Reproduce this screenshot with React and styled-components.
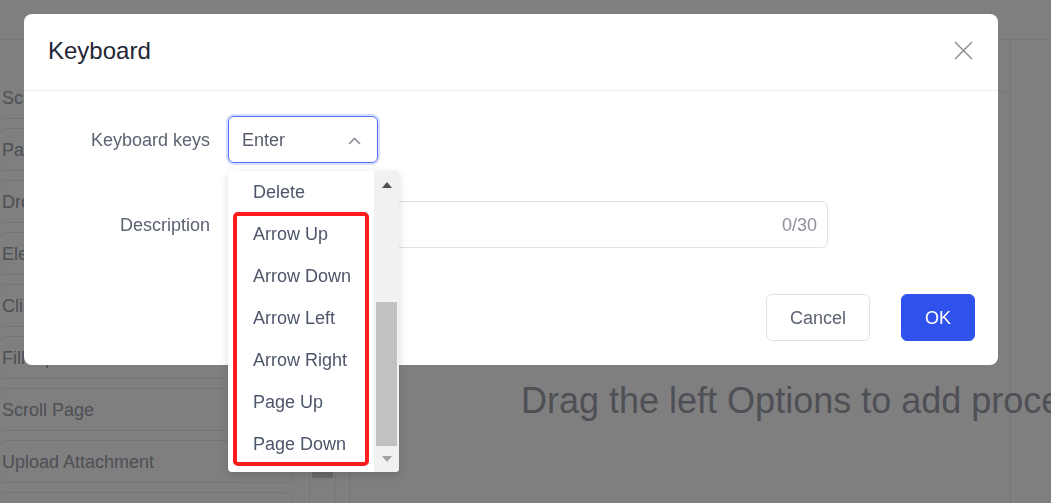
import React, { useLayoutEffect, useRef } from 'react';
import styled, { createGlobalStyle } from 'styled-components';

const GlobalStyle = createGlobalStyle`
  html, body {
    margin: 0;
    padding: 0;
    overflow: hidden;
  }
  body {
    font-family: "Liberation Sans", Arial, sans-serif;
    background: #fff;
  }
  * {
    box-sizing: border-box;
  }
`;

const ITEM_HEIGHT = 42;

const keyOptions = [
  'Enter',
  'Tab',
  'Space',
  'Backspace',
  'Delete',
  'Arrow Up',
  'Arrow Down',
  'Arrow Left',
  'Arrow Right',
  'Page Up',
  'Page Down',
  'Home',
  'End'
];

const sideItems = [
  'Scroll Into View',
  'Paste Text',
  'Drop Down',
  'Element Click',
  'Click Element',
  'Fill Input',
  'Scroll Page',
  'Upload Attachment',
  'Keyboard'
];

const Page = styled.div`
  width: 1051px;
  height: 503px;
  display: flex;
  flex-direction: column;
  background: #fff;
`;

const TopBar = styled.div`
  height: 40px;
  flex-shrink: 0;
  border-bottom: 1px solid #ececec;
`;

const Main = styled.div`
  flex: 1;
  display: flex;
  min-height: 0;
`;

const Sidebar = styled.div`
  width: 350px;
  flex-shrink: 0;
  display: flex;
  border-right: 1px solid #ececec;
`;

const SideColumn = styled.div`
  width: 309px;
  display: flex;
  flex-direction: column;
`;

const SideHeader = styled.div`
  height: 47px;
  flex-shrink: 0;
`;

const CardList = styled.div`
  flex: 1;
  overflow: hidden;
`;

const Card = styled.div`
  width: 293px;
  height: 43px;
  margin-bottom: 9px;
  margin-left: -1px;
  padding: 2px 0 0 2px;
  display: flex;
  align-items: center;
  border: 1px solid #ebebeb;
  border-radius: 6px;
  font-size: 18px;
  color: #9aa0ab;
`;

const SideScroll = styled.div`
  width: 27px;
  display: flex;
  flex-direction: column;
  justify-content: flex-end;
  align-items: center;
  padding-bottom: 25px;
  border-left: 1px solid #f0f0f0;
  border-right: 1px solid #f0f0f0;
`;

const SideThumb = styled.div`
  width: 21px;
  height: 7px;
  background: #d4d4d4;
`;

const RightPanel = styled.div`
  width: 661px;
  flex-shrink: 0;
  display: flex;
  flex-direction: column;
  border-right: 1px solid #ececec;
`;

const PanelHeader = styled.div`
  height: 52px;
  flex-shrink: 0;
  border-bottom: 1px solid #ececec;
`;

const EmptyHint = styled.div`
  padding: 289px 0 0 171px;
  font-size: 36px;
  line-height: 40px;
  color: #9ca1ab;
  white-space: nowrap;
`;

const Mask = styled.div`
  position: fixed;
  inset: 0;
  background: rgba(0, 0, 0, 0.5);
`;

const Dialog = styled.div`
  position: fixed;
  top: 14px;
  left: 24px;
  width: 974px;
  height: 351px;
  background: #fff;
  border-radius: 8px;
  display: flex;
  flex-direction: column;
`;

const DialogHeader = styled.div`
  height: 77px;
  flex-shrink: 0;
  padding: 0 24px;
  display: flex;
  align-items: center;
  justify-content: space-between;
  border-bottom: 1px solid #ececec;
`;

const DialogTitle = styled.div`
  font-size: 24px;
  color: #1f2636;
  margin-top: -2px;
`;

const CloseButton = styled.button`
  width: 20px;
  height: 20px;
  padding: 0;
  margin-right: 1px;
  margin-top: -4px;
  border: none;
  background: none;
  display: flex;
  align-items: center;
  justify-content: center;
  cursor: pointer;
`;

const DialogBody = styled.div`
  flex: 1;
  padding: 25px 23px 24px 24px;
  display: flex;
  flex-direction: column;
`;

const FormRow = styled.div`
  display: flex;
  align-items: center;
  gap: 18px;
  margin-bottom: ${p => p.$gap}px;
`;

const Label = styled.div`
  width: 162px;
  padding-top: 1px;
  text-align: right;
  font-size: 18px;
  color: #5b6271;
`;

const SelectWrap = styled.div`
  position: relative;
`;

const SelectBox = styled.div`
  width: 150px;
  height: 47px;
  padding: 2px 16px 0 13px;
  display: flex;
  align-items: center;
  justify-content: space-between;
  border: 1px solid #5470f2;
  border-radius: 6px;
  box-shadow: 0 0 0 2px #d7ddfc;
  font-size: 18px;
  color: #565d6c;
`;

const Dropdown = styled.div`
  position: absolute;
  top: 55px;
  left: 0;
  width: 171px;
  height: 301px;
  display: flex;
  background: #fff;
  border-radius: 4px;
  box-shadow: 0 3px 10px rgba(0, 0, 0, 0.14);
  overflow: hidden;
  z-index: 2;
`;

const OptionList = styled.div`
  flex: 1;
  overflow-y: scroll;
  scrollbar-width: none;
  &::-webkit-scrollbar {
    display: none;
  }
`;

const Option = styled.div`
  height: ${ITEM_HEIGHT}px;
  padding-left: 25px;
  display: flex;
  align-items: center;
  font-size: 18px;
  color: #4d566b;
  white-space: nowrap;
`;

const ScrollTrack = styled.div`
  width: 25px;
  flex-shrink: 0;
  display: flex;
  flex-direction: column;
  background: #f1f1f1;
`;

const ScrollArrow = styled.div`
  height: ${p => p.$h}px;
  display: flex;
  align-items: center;
  justify-content: center;
  flex-shrink: 0;
`;

const ScrollRail = styled.div`
  flex: 1;
  padding: 0 2px;
`;

const ScrollThumb = styled.div`
  height: 144px;
  background: #c1c1c1;
`;

const Highlight = styled.div`
  position: absolute;
  top: 41px;
  left: 5px;
  width: 136px;
  height: 254px;
  border: 4px solid #ff1c1c;
  border-radius: 5px;
  pointer-events: none;
`;

const TextField = styled.div`
  width: 600px;
  height: 47px;
  padding: 1px 10px 0 14px;
  display: flex;
  align-items: center;
  justify-content: flex-end;
  border: 1px solid #e2e2e2;
  border-radius: 6px;
  font-size: 18px;
  color: #8b909a;
`;

const Footer = styled.div`
  margin-top: auto;
  display: flex;
  justify-content: flex-end;
  gap: 31px;
`;

const Button = styled.button`
  height: 47px;
  padding: 2px 23px 0;
  border-radius: 6px;
  font-family: inherit;
  font-size: 18px;
  cursor: pointer;
  border: 1px solid ${p => (p.$primary ? '#2f52ed' : '#e2e2e2')};
  background: ${p => (p.$primary ? '#2f52ed' : '#fff')};
  color: ${p => (p.$primary ? '#fff' : '#5b6271')};
`;

const Triangle = ({ up, color }) => (
  <svg width="10" height="6" viewBox="0 0 10 6">
    <path d={up ? 'M0 6 L5 0 L10 6 Z' : 'M0 0 L5 6 L10 0 Z'} fill={color} />
  </svg>
);

function KeySelect() {
  const listRef = useRef(null);
  const firstShown = keyOptions.indexOf('Delete');

  useLayoutEffect(() => {
    if (listRef.current) listRef.current.scrollTop = firstShown * ITEM_HEIGHT;
  }, [firstShown]);

  return (
    <SelectWrap>
      <SelectBox>
        <span>Enter</span>
        <svg width="13" height="8" viewBox="0 0 13 8">
          <polyline points="1,7 6.5,1.5 12,7" fill="none" stroke="#8a8f99" strokeWidth="1.6" />
        </svg>
      </SelectBox>
      <Dropdown>
        <OptionList ref={listRef}>
          {keyOptions.map(k => (
            <Option key={k}>{k}</Option>
          ))}
        </OptionList>
        <ScrollTrack>
          <ScrollArrow $h={28}>
            <Triangle up color="#505050" />
          </ScrollArrow>
          <ScrollRail>
            <ScrollThumb style={{ marginTop: 103 }} />
          </ScrollRail>
          <ScrollArrow $h={26}>
            <Triangle color="#a3a3a3" />
          </ScrollArrow>
        </ScrollTrack>
        <Highlight />
      </Dropdown>
    </SelectWrap>
  );
}

function Background() {
  const cardsRef = useRef(null);

  useLayoutEffect(() => {
    if (cardsRef.current) cardsRef.current.scrollTop = 11;
  }, []);

  return (
    <Page>
      <TopBar />
      <Main>
        <Sidebar>
          <SideColumn>
            <SideHeader />
            <CardList ref={cardsRef}>
              {sideItems.map(s => (
                <Card key={s}>{s}</Card>
              ))}
            </CardList>
          </SideColumn>
          <SideScroll>
            <SideThumb />
          </SideScroll>
        </Sidebar>
        <RightPanel>
          <PanelHeader />
          <EmptyHint>Drag the left Options to add process</EmptyHint>
        </RightPanel>
      </Main>
    </Page>
  );
}

export default function App() {
  return (
    <>
      <GlobalStyle />
      <Background />
      <Mask />
      <Dialog>
        <DialogHeader>
          <DialogTitle>Keyboard</DialogTitle>
          <CloseButton aria-label="Close">
            <svg width="19" height="19" viewBox="0 0 19 19">
              <path d="M1 1 L18 18 M18 1 L1 18" stroke="#8f8f8f" strokeWidth="1.5" />
            </svg>
          </CloseButton>
        </DialogHeader>
        <DialogBody>
          <FormRow $gap={38}>
            <Label>Keyboard keys</Label>
            <KeySelect />
          </FormRow>
          <FormRow $gap={0}>
            <Label>Description</Label>
            <TextField>0/30</TextField>
          </FormRow>
          <Footer>
            <Button>Cancel</Button>
            <Button $primary>OK</Button>
          </Footer>
        </DialogBody>
      </Dialog>
    </>
  );
}
